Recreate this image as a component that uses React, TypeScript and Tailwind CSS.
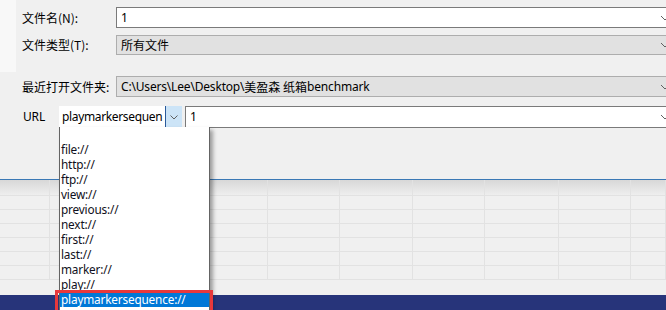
import React from "react";

const cjk = { fontFamily: '"Noto Sans CJK SC", "Noto Sans", sans-serif', letterSpacing: "0px" };
const latin = { fontFamily: '"Noto Sans", "Noto Sans CJK SC", sans-serif' };

function EdgeChevron() {
  return (
    <svg className="absolute left-[660px] top-1/2 -translate-y-1/2" width="10" height="6" viewBox="0 0 10 6">
      <path d="M1 1 L5 5 L9 1" fill="none" stroke="#606060" strokeWidth="1" />
    </svg>
  );
}

const items = [
  "",
  "file://",
  "http://",
  "ftp://",
  "view://",
  "previous://",
  "next://",
  "first://",
  "last://",
  "marker://",
  "play://",
];

const colWidths = [50, 73, 72, 73, 72, 73, 72, 74, 72, 35];

export default function App() {
  return (
    <div className="relative w-[666px] h-[310px] overflow-hidden bg-[#f0f0f0] text-[12px] text-black tracking-[-0.18px]" style={latin}>
      {/* top panel */}
      <div className="flex h-[72px] bg-[#f8f8f8]">
        <div className="w-[16px]" />
        <div className="flex-1 bg-[#f0f0f0] pt-[7px] pl-[6px] flex flex-col gap-[7px]">
          <div className="flex items-center h-[21px]">
            <div className="w-[94px]" style={cjk}>文件名(N):</div>
            <div className="relative flex-1 h-full bg-white border-y border-l border-[#7a7a7a] flex items-center pl-[4px]">
              1
            </div>
          </div>
          <div className="flex items-center h-[20px]">
            <div className="w-[94px]" style={cjk}>文件类型(T):</div>
            <div className="relative flex-1 h-full bg-[#e1e1e1] border-y border-l border-[#adadad] flex items-center pl-[4px]" style={cjk}>
              所有文件
            </div>
          </div>
        </div>
      </div>

      {/* recent folder */}
      <div className="flex items-center h-[21px] mt-[4px] pl-[22px]">
        <div className="w-[94px]" style={cjk}>最近打开文件夹:</div>
        <div className="flex-1 h-full bg-[#e1e1e1] border-y border-l border-[#adadad] flex items-center pl-[4px]">
          C:\Users\Lee\Desktop\<span style={cjk}>美盈森 纸箱</span>benchmark
        </div>
      </div>

      {/* URL row */}
      <div className="flex items-center h-[22px] mt-[9px] pl-[23px]">
        <div className="w-[36px]">URL</div>
        <div className="flex h-full w-[123px] bg-white">
          <div className="flex-1 flex items-center pl-[3px] border-r border-[#2a5a9a] overflow-hidden whitespace-nowrap tracking-[-0.35px]">playmarkersequen</div>
          <div className="w-[16px] bg-[#cce4f7] flex items-center justify-center">
            <svg width="8" height="5" viewBox="0 0 8 5">
              <path d="M0.5 0.5 L4 4 L7.5 0.5" fill="none" stroke="#606060" strokeWidth="1" />
            </svg>
          </div>
        </div>
        <div className="w-[3px]" />
        <div className="flex-1 h-full bg-white border-y border-l border-[#7a7a7a] flex items-center pl-[4px]">1</div>
      </div>

      {/* grid */}
      <div className="mt-[51px] border-t border-[#3a78b5]">
        <div className="flex h-[16px] border-b border-[#e2e2e2] bg-gradient-to-b from-[#d8d8d8] to-[#eeeeee]">
          {colWidths.map((w, i) => (
            <div key={i} className="h-full border-r border-[#e2e2e2] shrink-0" style={{ width: w }} />
          ))}
        </div>
        {[0, 1, 2, 3, 4, 5].map((r) => (
          <div key={r} className="flex h-[14px] border-b border-[#e2e2e2] bg-[#f0f0f0]">
            {colWidths.map((w, i) => (
              <div key={i} className="h-full border-r border-[#e2e2e2] shrink-0" style={{ width: w }} />
            ))}
          </div>
        ))}
      </div>
      <div className="h-[15px]" />
      <div className="h-[15px] bg-[#27347a]" />

      {/* right-edge chevrons */}
      <div className="absolute left-0 top-[7px] w-full h-[21px]"><EdgeChevron /></div>
      <div className="absolute left-0 top-[35px] w-full h-[20px]"><EdgeChevron /></div>
      <div className="absolute left-0 top-[76px] w-full h-[21px]"><EdgeChevron /></div>
      <div className="absolute left-0 top-[106px] w-full h-[22px]"><EdgeChevron /></div>

      {/* dropdown list */}
      <div className="absolute left-[59px] top-[127px] w-[151px] h-[190px] bg-white border-x border-[#646464] shadow-[3px_3px_4px_rgba(0,0,0,0.35)] text-[11.8px]">
        {items.map((t, i) => (
          <div key={i} className="h-[15px] leading-[15px] pl-[1px] text-[#101020]">
            {t}
          </div>
        ))}
        <div className="h-[15px] leading-[15px] pl-[1px] bg-[#0078d7] text-white">playmarkersequence://</div>
      </div>
      {/* red annotation box */}
      <div className="absolute left-[55px] top-[290px] w-[158px] h-[26px] border-[3px] border-[#e8383b]" />
    </div>
  );
}
